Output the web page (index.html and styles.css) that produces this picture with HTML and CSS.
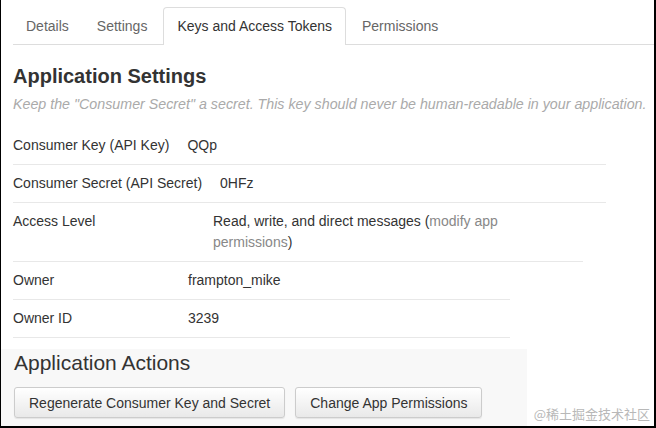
FILE: index.html
```html
<!DOCTYPE html>
<html>
<head>
<meta charset="utf-8">
<link rel="stylesheet" href="styles.css">
</head>
<body>
<div class="frame">
  <ul class="tabs">
    <li class="tab">Details</li>
    <li class="tab">Settings</li>
    <li class="tab active">Keys and Access Tokens</li>
    <li class="tab">Permissions</li>
  </ul>
  <h2 class="title">Application Settings</h2>
  <p class="hint">Keep the "Consumer Secret" a secret. This key should never be human-readable in your application.</p>
  <div class="rows">
    <div class="row w593"><span class="label">Consumer Key (API Key)</span><span class="value">QQp</span></div>
    <div class="row w593"><span class="label">Consumer Secret (API Secret)</span><span class="value">0HFz</span></div>
    <div class="row w570"><span class="label l200">Access Level</span><span class="value v-wide">Read, write, and direct messages (<span class="link">modify app permissions</span>)</span></div>
    <div class="row w497"><span class="label l175">Owner</span><span class="value">frampton_mike</span></div>
    <div class="row w497"><span class="label l175">Owner ID</span><span class="value">3239</span></div>
  </div>
  <div class="actions">
    <h3 class="actions-title">Application Actions</h3>
    <div class="buttons">
      <button class="btn">Regenerate Consumer Key and Secret</button>
      <button class="btn">Change App Permissions</button>
    </div>
  </div>
  <div class="watermark">@稀土掘金技术社区</div>
</div>
</body>
</html>
```
FILE: styles.css
```css
html, body {
  margin: 0;
  padding: 0;
  background: #fff;
}
body {
  font-family: "Liberation Sans", Arial, sans-serif;
  color: #333;
  font-size: 14px;
}
.frame {
  position: relative;
  width: 656px;
  height: 428px;
  box-sizing: border-box;
  border-left: 1px solid #000;
  border-right: 2px solid #000;
  border-bottom: 2px solid #000;
  overflow: hidden;
}
.tabs {
  list-style: none;
  margin: 7px 0 0 12px;
  padding: 0;
  display: flex;
  border-bottom: 1px solid #ddd;
  height: 37px;
}
.tab {
  padding: 0 12px;
  line-height: 37px;
  color: #666;
  margin-right: 2px;
  border: 1px solid transparent;
  border-bottom: none;
  border-radius: 4px 4px 0 0;
}
.tab.active {
  color: #333;
  border-color: #ddd;
  background: #fff;
  height: 37px;
  margin-bottom: -1px;
  padding: 0 13px 0 13px;
  margin-left: 1px;
  margin-right: 3px;
}
.title {
  margin: 19px 0 0 12px;
  font-size: 20px;
  font-weight: bold;
  line-height: 24px;
  color: #333;
}
.hint {
  margin: 6px 0 0 12px;
  font-style: italic;
  color: #aaa;
  font-size: 14.25px;
  line-height: 20px;
}
.rows {
  margin: 13px 0 0 12px;
}
.row {
  display: flex;
  padding: 8px 0;
  line-height: 21px;
  border-bottom: 1px solid #e8e8e8;
}
.w593 { width: 593px; }
.w570 { width: 570px; }
.w497 { width: 497px; }
.label {
  margin-right: 18px;
}
.l200 { width: 200px; margin-right: 0; flex: none; }
.l175 { width: 175px; margin-right: 0; flex: none; }
.v-wide { width: 300px; }
.link { color: #888; }
.actions {
  margin-top: 11px;
  background: #f8f8f8;
  width: 513px;
  padding: 1px 0 12px 13px;
  height: 80px;
}
.actions-title {
  margin: 0;
  font-size: 21px;
  font-weight: normal;
  line-height: 26px;
  color: #333;
}
.buttons {
  display: flex;
  gap: 10px;
  margin-top: 11px;
}
.btn {
  font-family: "Liberation Sans", Arial, sans-serif;
  font-size: 14px;
  color: #333;
  height: 31px;
  padding: 0 14px;
  border: 1px solid #ccc;
  border-radius: 3px;
  background: linear-gradient(#fff, #e9e9e9);
  box-shadow: 0 1px 1px rgba(0,0,0,0.08);
}
.watermark {
  position: absolute;
  right: 4px;
  bottom: 4px;
  font-family: "Noto Sans CJK SC", sans-serif;
  font-size: 13px;
  color: #b8b8b8;
  line-height: 16px;
}
```
